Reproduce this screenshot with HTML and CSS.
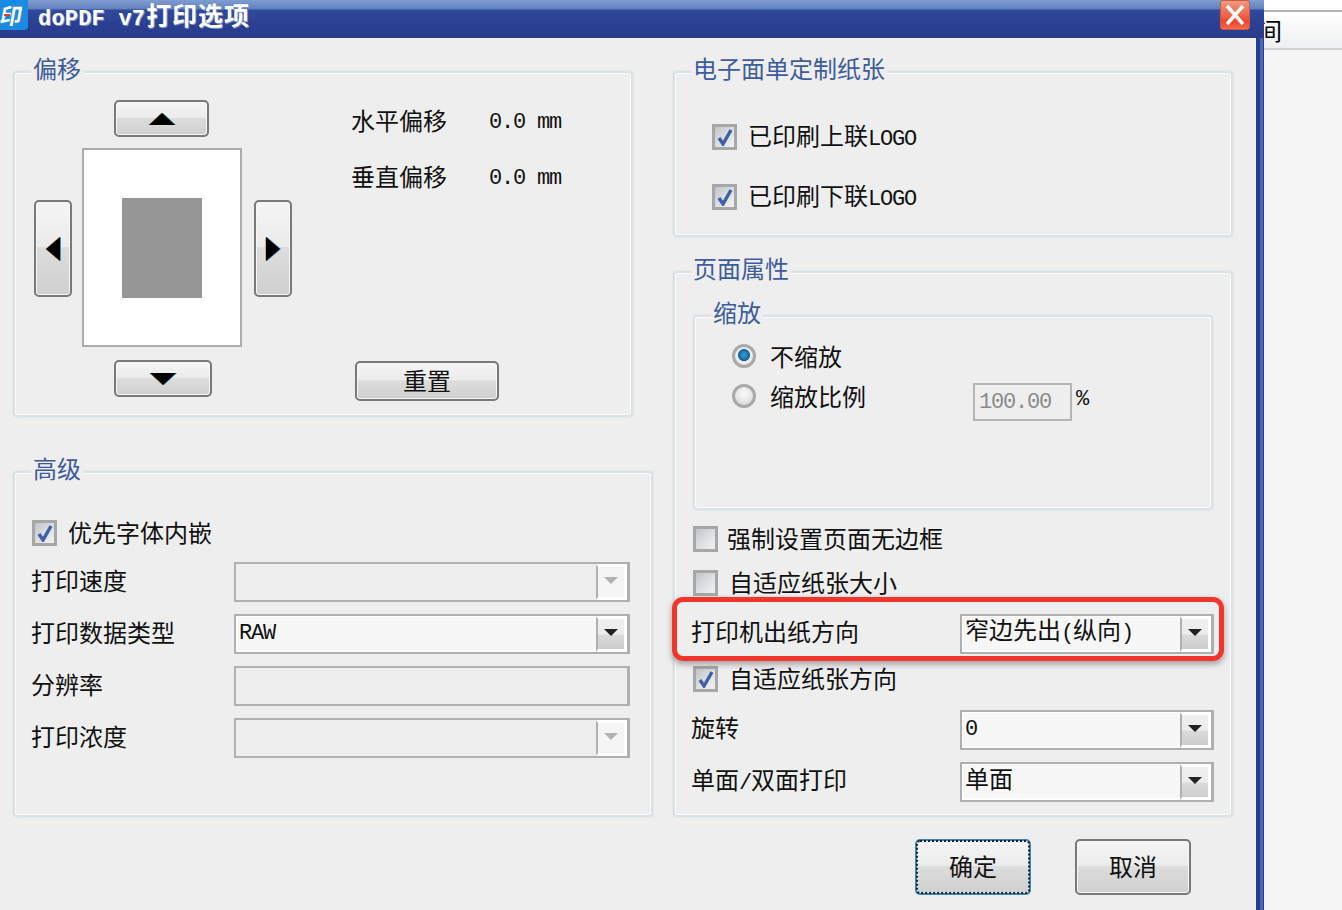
FILE: index.html
```html
<!DOCTYPE html>
<html lang="zh-CN">
<head>
<meta charset="utf-8">
<title>doPDF v7打印选项</title>
<link rel="stylesheet" href="styles.css">
</head>
<body>
<div class="screen">
  <div class="dialog">
    <header class="titlebar">
      <svg class="app-icon" viewBox="0 0 28 30" width="28" height="30"><rect x="-4" y="-4" width="32" height="34" rx="4" fill="#1a8ae2"/><text x="10" y="24" text-anchor="middle" transform="skewX(-10) translate(4 0)" class="app-glyph">印</text><path d="M4 15h6" stroke="#e8383a" stroke-width="2"/></svg>
      <div class="title"><span class="title-lat">doPDF v7</span>打印选项</div>
      <div class="close"><svg viewBox="0 0 30 30" width="30" height="30"><path d="M7 6l16 18M23 6L7 24" stroke="#fff" stroke-width="3.4"/></svg></div>
    </header>
    <main class="client">
      <div class="columns">
        <div class="col col-left">
          <section class="panel panel-offset">
            <div class="legend">偏移</div>
            <div class="offset-body">
              <div class="pad">
                <button class="btn btn-up"><i class="tri tri-up"></i></button>
                <button class="btn btn-left"><i class="tri tri-left"></i></button>
                <div class="sheet"><div class="sheet-area"></div></div>
                <button class="btn btn-right"><i class="tri tri-right"></i></button>
                <button class="btn btn-down"><i class="tri tri-down"></i></button>
              </div>
              <div class="offset-info">
                <div class="info-row"><span class="info-label">水平偏移</span><span class="lat">0.0 mm</span></div>
                <div class="info-row"><span class="info-label">垂直偏移</span><span class="lat">0.0 mm</span></div>
                <button class="btn btn-reset"><span class="btn-text">重置</span></button>
              </div>
            </div>
          </section>
          <section class="panel panel-advanced">
            <div class="legend">高级</div>
            <div class="adv-body">
              <label class="check-row adv-check"><i class="check on"><svg viewBox="0 0 18 18" width="18" height="18"><path d="M3 10l4 6 8-14" class="tick"/></svg></i><span class="check-text">优先字体内嵌</span></label>
              <div class="adv-grid">
                <span class="field-label">打印速度</span>
                <div class="combo disabled"><span class="combo-value"></span><span class="combo-btn"><i class="mini"></i></span></div>
                <span class="field-label">打印数据类型</span>
                <div class="combo"><span class="combo-value combo-lat lat">RAW</span><span class="combo-btn"><i class="mini"></i></span></div>
                <span class="field-label">分辨率</span>
                <div class="combo disabled"><span class="combo-value"></span></div>
                <span class="field-label">打印浓度</span>
                <div class="combo disabled"><span class="combo-value"></span><span class="combo-btn"><i class="mini"></i></span></div>
              </div>
            </div>
          </section>
        </div>
        <div class="col col-right">
          <section class="panel panel-form">
            <div class="legend">电子面单定制纸张</div>
            <div class="form-body">
              <label class="check-row"><i class="check on"><svg viewBox="0 0 18 18" width="18" height="18"><path d="M3 10l4 6 8-14" class="tick"/></svg></i><span class="check-text">已印刷上联<span class="lat">LOGO</span></span></label>
              <label class="check-row"><i class="check on"><svg viewBox="0 0 18 18" width="18" height="18"><path d="M3 10l4 6 8-14" class="tick"/></svg></i><span class="check-text">已印刷下联<span class="lat">LOGO</span></span></label>
            </div>
          </section>
          <section class="panel panel-page">
            <div class="legend">页面属性</div>
            <div class="page-body">
              <section class="panel panel-scale">
                <div class="legend">缩放</div>
                <div class="scale-body">
                  <label class="radio-row"><i class="radio on"></i><span class="radio-text">不缩放</span></label>
                  <label class="radio-row"><i class="radio"></i><span class="radio-text">缩放比例</span><span class="percent-input lat">100.00</span><span class="percent lat">%</span></label>
                </div>
              </section>
              <div class="page-grid">
                <label class="check-row row-a"><i class="check"></i><span class="check-text">强制设置页面无边框</span></label>
                <label class="check-row row-b"><i class="check"></i><span class="check-text">自适应纸张大小</span></label>
                <div class="select-row highlighted">
                  <span class="field-label">打印机出纸方向</span>
                  <div class="combo"><span class="combo-value combo-mixed">窄边先出<span class="lat">(</span>纵向<span class="lat">)</span></span><span class="combo-btn"><i class="mini"></i></span></div>
                  <div class="callout"></div>
                </div>
                <label class="check-row row-b"><i class="check on"><svg viewBox="0 0 18 18" width="18" height="18"><path d="M3 10l4 6 8-14" class="tick"/></svg></i><span class="check-text">自适应纸张方向</span></label>
                <div class="select-row">
                  <span class="field-label">旋转</span>
                  <div class="combo"><span class="combo-value combo-lat lat">0</span><span class="combo-btn"><i class="mini"></i></span></div>
                </div>
                <div class="select-row">
                  <span class="field-label">单面<span class="lat">/</span>双面打印</span>
                  <div class="combo"><span class="combo-value">单面</span><span class="combo-btn"><i class="mini"></i></span></div>
                </div>
              </div>
            </div>
          </section>
        </div>
      </div>
      <footer class="actions">
        <button class="btn btn-action focused"><span class="btn-text">确定</span></button>
        <button class="btn btn-action"><span class="btn-text">取消</span></button>
      </footer>
    </main>
  </div>
  <aside class="behind">
    <div class="behind-top"></div>
    <div class="behind-head"><span class="behind-text">间</span></div>
    <div class="behind-rest"></div>
  </aside>
</div>
</body>
</html>
```

FILE: styles.css
```css
* { box-sizing: border-box; }
html, body { margin: 0; padding: 0; }
body {
  width: 1342px;
  height: 910px;
  overflow: hidden;
  font-family: "Noto Sans CJK SC", "Liberation Sans", sans-serif;
  font-size: 24px;
  color: #111;
  background: #eee;
}
i { font-style: normal; display: block; }
.screen { display: flex; width: 1342px; height: 910px; }
.dialog {
  width: 1264px;
  height: 910px;
  display: flex;
  flex-direction: column;
  background: linear-gradient(90deg, #2a3c8e 0, #2a3c8e 1260px, #4a68b6 1260px, #4a68b6 1263px, #2a3c8e 1263px);
}

.lat { font-family: "Liberation Mono", monospace; font-size: 22px; letter-spacing: -1.2px; }

/* title bar */
.titlebar {
  height: 38px;
  flex: none;
  display: flex;
  align-items: flex-start;
  padding-right: 14px;
  background: linear-gradient(180deg, #7f9dd0 0, #5f80bd 9px, #31499b 10px, #2b4194 22px, #293a8c 38px);
}
.app-icon { flex: none; display: block; }
.app-glyph { font-family: "Noto Sans CJK SC", sans-serif; font-size: 22px; font-weight: 700; fill: #fff; }
.title {
  margin-left: 10px;
  font-size: 25px;
  font-weight: 700;
  line-height: 28px;
  color: #fff;
  letter-spacing: .9px;
  white-space: nowrap;
  text-shadow: 1px 1px 0 #7f95cc;
}
.title-lat { font-family: "Liberation Mono", monospace; font-size: 22px; letter-spacing: .2px; margin-right: 1px; }
.close {
  margin-left: auto;
  width: 30px;
  height: 30px;
  flex: none;
  border-radius: 3px;
  border: 1px solid #c65a4a;
  overflow: hidden;
  display: flex;
  align-items: center;
  justify-content: center;
  background: linear-gradient(180deg, #f29a80 0, #ee6a4c 45%, #f0462c 75%, #f56a4e 100%);
}
.close svg { flex: none; display: block; }

/* client */
.client {
  flex: 1;
  width: 1256px;
  background: #eee;
  padding: 33px 0 0 13px;
  display: flex;
  flex-direction: column;
}
.columns { display: grid; grid-template-columns: 640px 560px; column-gap: 20px; }
.col { display: flex; flex-direction: column; }
.col-left { row-gap: 54px; }
.col-right { row-gap: 34px; }

.panel {
  border: 2px solid #dbe2e5;
  border-radius: 4px;
  box-shadow: inset 0 0 0 1px #fbfbfb, 0 0 0 1px rgba(218, 226, 230, .55);
}
.legend {
  width: fit-content;
  height: 28px;
  margin: -19px 0 1px 16px;
  padding: 0 2px;
  line-height: 28px;
  color: #3d5c9c;
  background: #eee;
  white-space: nowrap;
}
.panel-offset { width: 620px; height: 346px; }
.panel-advanced { width: 640px; height: 346px; }
.panel-form { width: 560px; height: 166px; }
.panel-page { width: 560px; height: 546px; }

/* buttons */
.btn {
  margin: 0;
  padding: 0;
  font: inherit;
  color: #111;
  border: 2px solid #797979;
  border-radius: 5px;
  box-shadow: inset 0 0 0 1px #f6f6f6;
  background: linear-gradient(180deg, #f5f5f5 0, #ebebeb 48%, #dddddd 49%, #cfcfcf 100%);
  display: flex;
  align-items: center;
  justify-content: center;
}
.btn-text { margin-bottom: 4px; }
.tri { width: 0; height: 0; border-style: solid; border-color: transparent; filter: drop-shadow(-1px 0 0 #d8a878) drop-shadow(1px 0 0 #3a90c8); }
.tri-up { border-width: 0 13px 12px; border-bottom-color: #000; }
.tri-down { border-width: 12px 13px 0; border-top-color: #000; }
.tri-left { border-width: 12px 14px 12px 0; border-right-color: #000; }
.tri-right { border-width: 12px 0 12px 14px; border-left-color: #000; }

/* offset */
.offset-body { display: flex; padding: 17px 0 0 19px; }
.pad {
  display: grid;
  grid-template-columns: 38px 160px 38px;
  grid-template-rows: 37px 199px 37px;
  column-gap: 10px;
  row-gap: 11px;
  align-self: flex-start;
  flex: none;
}
.btn-up { grid-column: 2; grid-row: 1; width: 95px; height: 37px; justify-self: start; margin-left: 32px; }
.btn-down { grid-column: 2; grid-row: 3; width: 98px; height: 37px; justify-self: start; margin: 2px 0 0 32px; }
.btn-left { grid-column: 1; grid-row: 2; height: 97px; align-self: start; margin-top: 52px; }
.btn-right { grid-column: 3; grid-row: 2; height: 97px; align-self: start; margin: 52px 0 0 2px; width: 38px; }
.sheet {
  grid-column: 2;
  grid-row: 2;
  border: 2px solid #acacac;
  background: #fff;
  padding-top: 48px;
  display: flex;
  justify-content: center;
  align-items: flex-start;
}
.sheet-area { width: 80px; height: 100px; background: #969696; }
.offset-info { width: 200px; height: 300px; margin: 1px 0 0 61px; display: flex; flex-direction: column; row-gap: 14px; flex: none; }
.info-row { height: 42px; display: flex; align-items: center; column-gap: 42px; white-space: nowrap; }
.info-label { margin-bottom: 5px; }
.btn-reset { width: 144px; height: 40px; margin: auto 0 0 4px; }

/* advanced */
.adv-body { padding: 31px 0 0 16px; }
.check-row { display: flex; align-items: center; height: 38px; column-gap: 11px; white-space: nowrap; }
.adv-check { margin: 0 0 11px 2px; }
.check {
  width: 25px;
  height: 26px;
  margin-left: -1px;
  flex: none;
  border: 3px solid #a6a8a8;
  background: linear-gradient(135deg, #c0c4ca 0, #dfe0e2 55%, #f2f2f2 100%);
  display: flex;
  align-items: center;
  justify-content: center;
}
.check svg { display: block; }
.tick { fill: none; stroke: #3f5fa6; stroke-width: 3.4; }
.check-text { line-height: 30px; margin-bottom: 2px; }
.adv-grid {
  display: grid;
  grid-template-columns: 204px 394px;
  grid-auto-rows: 38px;
  row-gap: 14px;
  align-items: center;
}
.field-label { white-space: nowrap; margin-bottom: 6px; }

.combo {
  height: 40px;
  margin: -1px;
  border: 3px solid #aeb1b1;
  border-width: 2px 3px 2px 2px;
  background: #f7f7f7;
  display: flex;
}
.combo-value {
  flex: 1;
  padding-left: 3px;
  line-height: 28px;
  white-space: nowrap;
  box-shadow: inset 0 -2px 0 #fff, inset 0 1px 0 #fff, inset 1px 0 0 #fff;
}
.combo-mixed { line-height: 26px; }
.combo-lat { line-height: 35px; }
.combo-btn {
  width: 31px;
  flex: none;
  border-left: 2px solid #aeb1b1;
  border-top: 3px solid #fff;
  border-right: 3px solid #fff;
  border-bottom: 3px solid #fff;
  background: linear-gradient(180deg, #f0f0f0 0, #ececec 50%, #dadada 55%, #cdcdcd 100%);
  display: flex;
  justify-content: center;
  padding-top: 10px;
}
.mini { width: 0; height: 0; border-style: solid; border-width: 7px 7px 0; border-color: #222 transparent transparent; }
.combo.disabled { background: #eee; }
.combo.disabled .combo-value { box-shadow: none; }
.combo.disabled .combo-btn { background: #f5f5f5; }
.combo.disabled .mini { border-top-color: #b2b2b2; }

/* electronic form */
.form-body { padding: 35px 0 0 38px; display: flex; flex-direction: column; row-gap: 22px; }
.form-body .check-text { margin-bottom: 0; }

/* page */
.page-body { padding: 32px 18px 0; }
.panel-scale { width: 520px; height: 195px; }
.scale-body { padding: 10px 0 0 38px; }
.radio-row { display: flex; align-items: center; height: 40px; white-space: nowrap; }
.radio {
  width: 24px;
  height: 24px;
  margin: 0 0 2px -1px;
  flex: none;
  border-radius: 50%;
  border: 3px solid #a9a9a9;
  background: radial-gradient(circle at 50% 35%, #fafafa 0, #d4d4d4 100%);
}
.radio.on { background: radial-gradient(circle at 50% 45%, #3aa0dc 0, #14609c 42%, #f0f0f0 48%, #d8d8d8 100%); }
.radio-text { margin: 0 0 4px 14px; width: 203px; flex: none; }
.percent-input {
  width: 99px;
  height: 38px;
  flex: none;
  align-self: flex-end;
  margin-bottom: -4px;
  border: 2px solid #b4b6b6;
  padding-left: 4px;
  line-height: 36px;
  color: #8a8a8a;
}
.percent { margin-left: 4px; align-self: flex-end; margin-bottom: -2px; line-height: 38px; }

.page-grid {
  display: grid;
  grid-template-rows: 44px 49px 47px 49px 52px 38px;
  margin-top: 10px;
}
.row-a { margin-left: 1px; column-gap: 9px; }
.row-b { margin-left: 1px; column-gap: 11px; }
.select-row { position: relative; display: grid; grid-template-columns: 268px 252px; align-items: center; height: 38px; }
.select-row .field-label { margin-left: -2px; }
.callout {
  position: absolute;
  left: -21px;
  right: -11px;
  top: -16px;
  bottom: -10px;
  border: 5px solid #f2352b;
  border-radius: 11px;
  box-shadow: 0 3px 6px rgba(0, 0, 0, .35);
  pointer-events: none;
}

/* footer */
.actions { display: flex; justify-content: flex-end; column-gap: 44px; padding: 22px 65px 0 0; }
.btn-action { width: 116px; height: 56px; }
.focused { border-color: #3f86b4; outline: 2px dotted #123; outline-offset: -3px; }

/* window behind */
.behind { flex: 1; display: flex; flex-direction: column; overflow: hidden; background: #f5f5f5; }
.behind-top { height: 12px; background: #fff; border-bottom: 2px solid #b4b4b4; flex: none; }
.behind-head {
  height: 38px;
  flex: none;
  border-bottom: 2px solid #cfcfcf;
  background: linear-gradient(180deg, #fff 0, #eeeff0 100%);
  overflow: hidden;
  line-height: 36px;
}
.behind-text { display: block; margin-left: -6px; color: #000; }
.behind-rest { flex: 1; background: #f5f5f6; }
```
